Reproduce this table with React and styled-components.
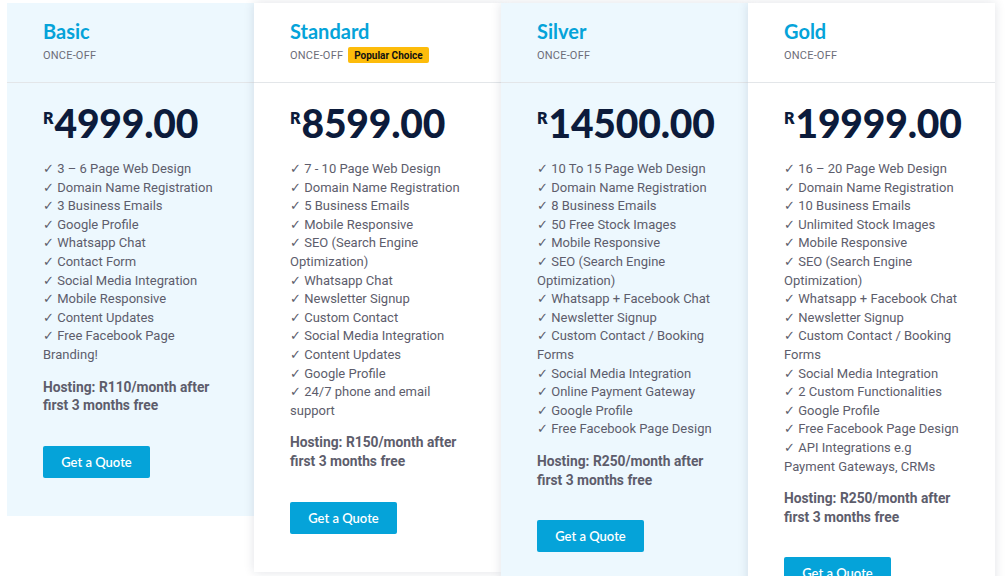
import React from "react";
import styled, { createGlobalStyle } from "styled-components";

const GlobalStyle = createGlobalStyle`
  body {
    margin: 0;
    background: #ffffff;
    font-family: "Roboto", "Liberation Sans", sans-serif;
  }
`;

const BRAND = "#05a3d9";
const NAVY = "#0c1b3b";
const GREY = "#5d5d6c";
const TINT = "#edf8fe";

const plans = [
  {
    name: "Basic",
    price: "4999.00",
    tinted: true,
    shadow: false,
    features: [
      "3 – 6 Page Web Design",
      "Domain Name Registration",
      "3 Business Emails",
      "Google Profile",
      "Whatsapp Chat",
      "Contact Form",
      "Social Media Integration",
      "Mobile Responsive",
      "Content Updates",
      "Free Facebook Page\nBranding!"
    ],
    hosting: "R110"
  },
  {
    name: "Standard",
    badge: "Popular Choice",
    price: "8599.00",
    tinted: false,
    shadow: true,
    features: [
      "7 - 10 Page Web Design",
      "Domain Name Registration",
      "5 Business Emails",
      "Mobile Responsive",
      "SEO (Search Engine\nOptimization)",
      "Whatsapp Chat",
      "Newsletter Signup",
      "Custom Contact",
      "Social Media Integration",
      "Content Updates",
      "Google Profile",
      "24/7 phone and email\nsupport"
    ],
    hosting: "R150"
  },
  {
    name: "Silver",
    price: "14500.00",
    tinted: true,
    shadow: true,
    features: [
      "10 To 15 Page Web Design",
      "Domain Name Registration",
      "8 Business Emails",
      "50 Free Stock Images",
      "Mobile Responsive",
      "SEO (Search Engine\nOptimization)",
      "Whatsapp + Facebook Chat",
      "Newsletter Signup",
      "Custom Contact / Booking\nForms",
      "Social Media Integration",
      "Online Payment Gateway",
      "Google Profile",
      "Free Facebook Page Design"
    ],
    hosting: "R250"
  },
  {
    name: "Gold",
    price: "19999.00",
    tinted: false,
    shadow: true,
    features: [
      "16 – 20 Page Web Design",
      "Domain Name Registration",
      "10 Business Emails",
      "Unlimited Stock Images",
      "Mobile Responsive",
      "SEO (Search Engine\nOptimization)",
      "Whatsapp + Facebook Chat",
      "Newsletter Signup",
      "Custom Contact / Booking\nForms",
      "Social Media Integration",
      "2 Custom Functionalities",
      "Google Profile",
      "Free Facebook Page Design",
      "API Integrations e.g\nPayment Gateways, CRMs"
    ],
    hosting: "R250"
  }
];

const Row = styled.div`
  display: flex;
  align-items: flex-start;
  padding: 3px 0 0 7px;
`;

const Card = styled.div`
  position: relative;
  flex: 0 0 247px;
  width: 247px;
  background: ${(p) => (p.$tinted ? TINT : "#ffffff")};
  box-shadow: ${(p) => (p.$shadow ? "0 0 10px rgba(20, 40, 70, 0.13)" : "none")};
`;

const Header = styled.div`
  height: 80px;
  box-sizing: border-box;
  padding: 16px 36px 0;
  border-bottom: 1px solid #e3e6e9;
`;

const Title = styled.h3`
  margin: 0;
  font-family: "Lato", "Liberation Sans", sans-serif;
  font-weight: 700;
  font-size: 20px;
  line-height: 24px;
  color: ${BRAND};
`;

const Meta = styled.div`
  display: flex;
  align-items: center;
  gap: 5px;
  margin-top: 4px;
  height: 16px;
`;

const Period = styled.span`
  font-size: 11px;
  letter-spacing: 0.2px;
  color: #6c6c78;
`;

const Badge = styled.span`
  display: inline-flex;
  align-items: center;
  height: 16px;
  padding: 0 6px;
  border-radius: 2px;
  background: #fdbc0b;
  color: #111;
  font-size: 10px;
  font-weight: 700;
`;

const Body = styled.div`
  padding: 18px 36px 38px;
`;

const Price = styled.div`
  display: flex;
  align-items: flex-start;
  height: 44px;
  color: ${NAVY};
  font-family: "Lato", "Liberation Sans", sans-serif;
`;

const Currency = styled.span`
  font-size: 16px;
  font-weight: 800;
  line-height: 16px;
  margin-top: 9px;
  margin-right: 1px;
`;

const Amount = styled.span`
  font-size: 39px;
  font-weight: 900;
  line-height: 44px;
  letter-spacing: -0.2px;
`;

const Features = styled.ul`
  list-style: none;
  margin: 15px 0 0;
  padding: 0;
`;

const Feature = styled.li`
  font-size: 13px;
  line-height: 18.6px;
  color: ${GREY};
  white-space: pre;
`;

const Hosting = styled.p`
  margin: 13px 0 0;
  font-size: 13.8px;
  line-height: 18.6px;
  font-weight: 700;
  color: ${GREY};
  white-space: nowrap;
`;

const QuoteButton = styled.button`
  display: block;
  margin-top: 31px;
  width: 107px;
  height: 32px;
  padding: 0;
  border: none;
  border-radius: 2px;
  background: ${BRAND};
  color: #ffffff;
  font-family: "Lato", "Liberation Sans", sans-serif;
  font-size: 13px;
  font-weight: 600;
  cursor: pointer;
`;

const PlanCard = ({ plan }) => (
  <Card $tinted={plan.tinted} $shadow={plan.shadow}>
    <Header>
      <Title>{plan.name}</Title>
      <Meta>
        <Period>ONCE-OFF</Period>
        {plan.badge && <Badge>{plan.badge}</Badge>}
      </Meta>
    </Header>
    <Body>
      <Price>
        <Currency>R</Currency>
        <Amount>{plan.price}</Amount>
      </Price>
      <Features>
        {plan.features.map((f) => (
          <Feature key={f}>{"✓ " + f}</Feature>
        ))}
      </Features>
      <Hosting>
        Hosting: {plan.hosting}/month after
        <br />
        first 3 months free
      </Hosting>
      <QuoteButton>Get a Quote</QuoteButton>
    </Body>
  </Card>
);

export default function App() {
  return (
    <>
      <GlobalStyle />
      <Row>
        {plans.map((p) => (
          <PlanCard key={p.name} plan={p} />
        ))}
      </Row>
    </>
  );
}
